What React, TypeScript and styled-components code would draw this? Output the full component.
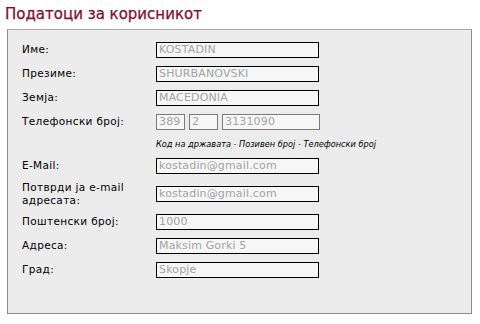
import React from "react";
import styled, { createGlobalStyle } from "styled-components";

const Global = createGlobalStyle`
  html, body { margin: 0; padding: 0; background: #ffffff; }
  body { font-family: "DejaVu Sans", Verdana, sans-serif; }
`;

const Page = styled.div`
  width: 480px;
  height: 324px;
  box-sizing: border-box;
  padding: 0 0 0 7px;
`;

const Title = styled.h1`
  margin: 0 0 0 -2px;
  padding: 4px 0 0 0;
  height: 26px;
  box-sizing: border-box;
  font-family: "DejaVu Sans", Verdana, sans-serif;
  font-weight: normal;
  font-size: 15px;
  line-height: 20px;
  color: #860a2a;
  -webkit-text-stroke: 0.25px #860a2a;
`;

const Panel = styled.div`
  width: 465px;
  height: 285px;
  box-sizing: border-box;
  margin-top: 3px;
  background: #ececec;
  border: 1px solid #8c8c8c;
  border-top-color: #a8a8a8;
  padding: 8px 0 0 14px;
  display: flex;
  flex-direction: column;
`;

const Row = styled.div<{ $h?: number }>`
  display: flex;
  align-items: center;
  height: ${(p) => p.$h ?? 24}px;
`;

const Label = styled.div`
  width: 134px;
  flex: none;
  font-size: 10.5px;
  line-height: 13.5px;
  color: #000;
  letter-spacing: 0.35px;
`;

const Field = styled.div<{ $w?: number; $soft?: boolean }>`
  width: ${(p) => p.$w ?? 163}px;
  height: 16px;
  box-sizing: border-box;
  border: 1px solid ${(p) => (p.$soft ? "#7a7a7a" : "#000")};
  background: #f6f6f6;
  color: #a3a3a3;
  font-size: 11px;
  line-height: 14px;
  padding-left: 2px;
  white-space: nowrap;
  overflow: hidden;
  letter-spacing: 0.15px;
`;

const Phone = styled.div`
  display: flex;
  gap: 4px;
`;

const Hint = styled.div`
  margin-left: 134px;
  font-size: 8.2px;
  font-style: italic;
  color: #000;
`;

const rows: [string, string][] = [
  ["Име:", "KOSTADIN"],
  ["Презиме:", "SHURBANOVSKI"],
  ["Земја:", "MACEDONIA"],
];

const rows2: [string, string][] = [
  ["Поштенски број:", "1000"],
  ["Адреса:", "Maksim Gorki 5"],
  ["Град:", "Skopje"],
];

export default function App() {
  return (
    <Page>
      <Global />
      <Title>Податоци за корисникот</Title>
      <Panel>
        {rows.map(([l, v]) => (
          <Row key={l}>
            <Label>{l}</Label>
            <Field>{v}</Field>
          </Row>
        ))}
        <Row>
          <Label>Телефонски број:</Label>
          <Phone>
            <Field $w={29} $soft>389</Field>
            <Field $w={29} $soft>2</Field>
            <Field $w={98} $soft>3131090</Field>
          </Phone>
        </Row>
        <Row $h={20}>
          <Hint>Код на државата - Позивен број - Телефонски број</Hint>
        </Row>
        <Row>
          <Label>E-Mail:</Label>
          <Field>kostadin@gmail.com</Field>
        </Row>
        <Row $h={32}>
          <Label>
            Потврди ја e-mail
            <br />
            адресата:
          </Label>
          <Field>kostadin@gmail.com</Field>
        </Row>
        {rows2.map(([l, v]) => (
          <Row key={l}>
            <Label>{l}</Label>
            <Field>{v}</Field>
          </Row>
        ))}
      </Panel>
    </Page>
  );
}
